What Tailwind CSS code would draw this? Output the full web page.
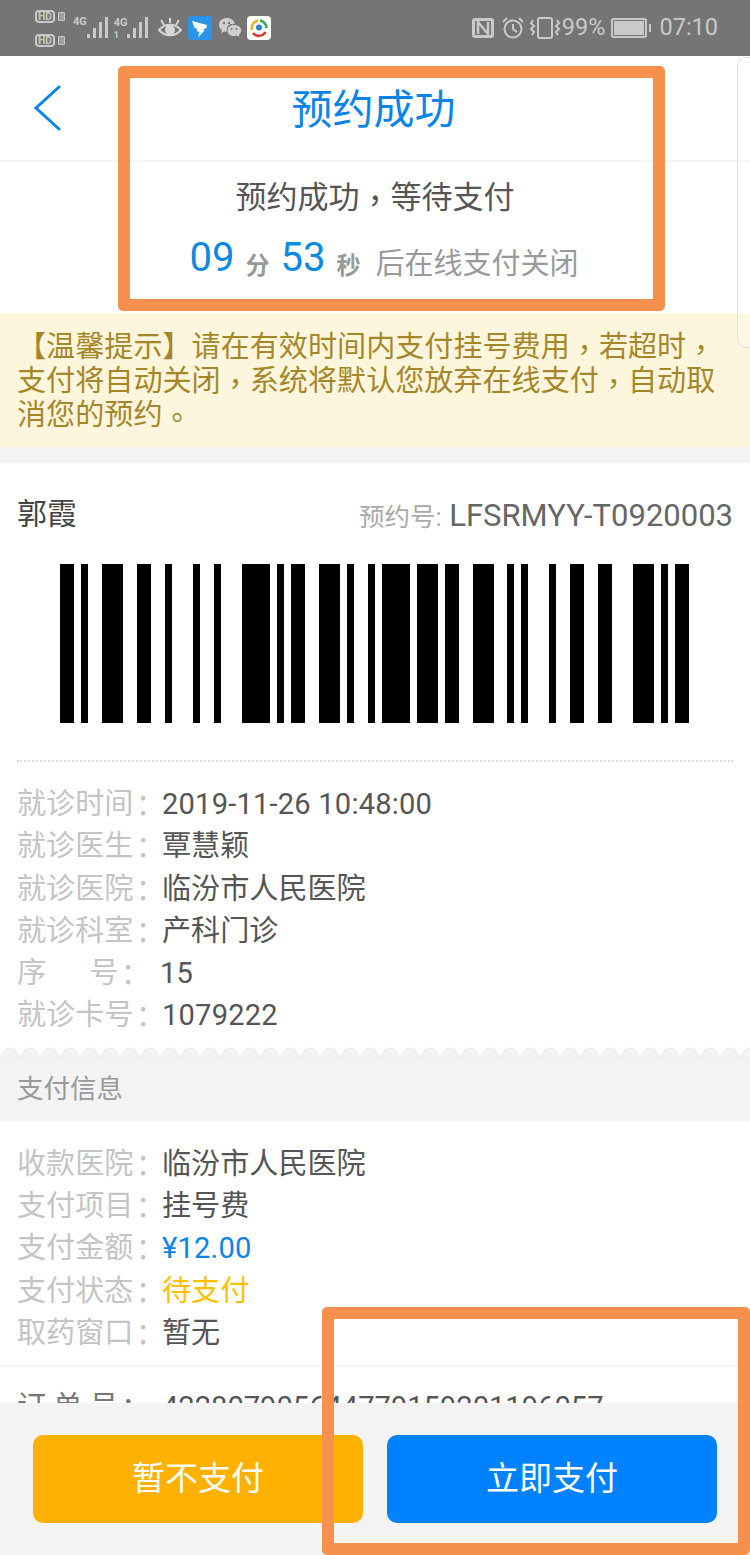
<!DOCTYPE html>
<html lang="zh-CN">
<head>
<meta charset="UTF-8">
<meta name="viewport" content="width=device-width, initial-scale=1.0">
<title>预约成功</title>
<script src="https://cdn.jsdelivr.net/npm/@tailwindcss/browser@4"></script>
</head>
<body class="bg-white font-['Roboto','Noto_Sans_CJK_SC',sans-serif]">
<div class="relative w-[750px] h-[1555px] overflow-hidden bg-white">

  <!-- status bar -->
  <div class="h-14 bg-[#757575] flex items-center text-[#c9c9c9]">
    <div class="ml-[35px] w-[31px] flex flex-col gap-[11px]">
      <div class="flex items-center gap-[3px]">
        <span class="w-5 h-[13px] border-2 border-[#c9c9c9] rounded-[4px] text-[10px] leading-[9px] font-bold text-center">HD</span>
        <span class="w-[7px] h-[9px] border border-[#c9c9c9] bg-[#c9c9c9]/50 rounded-[1px]"></span>
      </div>
      <div class="flex items-center gap-[3px]">
        <span class="w-5 h-[13px] border-2 border-[#c9c9c9] rounded-[4px] text-[10px] leading-[9px] font-bold text-center">HD</span>
        <span class="w-[7px] h-[9px] border border-[#c9c9c9] bg-[#c9c9c9]/50 rounded-[1px]"></span>
      </div>
    </div>
    <span class="ml-[7px] mb-[14px] text-[11px] leading-none font-bold">4G</span>
    <svg class="-ml-px" width="24" height="24" viewBox="0 0 24 24" fill="#c9c9c9"><rect x="1" y="18" width="3" height="4"/><rect x="7" y="12" width="3" height="10"/><rect x="13" y="6" width="3" height="16"/><rect x="19" y="1" width="3" height="21"/></svg>
    <div class="ml-1 w-[11px] h-[28px] flex flex-col justify-between text-[11px] leading-none font-bold"><span class="mt-[3px]">4G</span><span class="text-[9px] mb-[2px]">1</span></div>
    <svg class="ml-px" width="24" height="24" viewBox="0 0 24 24" fill="#c9c9c9"><rect x="1" y="18" width="3" height="4"/><rect x="7" y="12" width="3" height="10"/><rect x="13" y="6" width="3" height="16"/><rect x="19" y="1" width="3" height="21"/></svg>
    <svg class="ml-2" width="24" height="22" viewBox="0 0 24 22" fill="none" stroke="#d6d6d6" stroke-width="2"><path d="M1 13 C7 6 17 6 23 13 C17 20 7 20 1 13 Z"/><circle cx="12" cy="13" r="4" fill="#d6d6d6"/><path d="M3 3 L6 8 M21 3 L18 8 M12 1 V6"/></svg>
    <div class="ml-[6px] w-6 h-6 rounded-[4px] bg-[#2a94e8] flex items-center justify-center">
      <svg width="24" height="24" viewBox="0 0 24 24" fill="#fff"><path d="M4 5 L19 9 L18.5 12 L15 13.5 L16.5 14.5 L10 21.5 L11.5 16 L8.5 15 L9.5 13 L6.5 12 Z"/></svg>
    </div>
    <svg class="ml-[6px]" width="24" height="22" viewBox="0 0 24 22"><path d="M9 1 C4 1 1 4 1 8 C1 10 2 12 4 13 L3 16 L6.5 14.5 C7 14.6 8 14.7 9 14.7 Z M9 1 C13 1 16 3.5 17 7 C12 6 8 9 8.5 14.7 L9 14.7 Z" fill="#d0d0d0"/><path d="M16 7.5 C12 7.5 9 10 9 13.5 C9 17 12 19.5 16 19.5 C17 19.5 18 19.3 19 19 L22 20.5 L21.5 17.5 C22.5 16.5 23.5 15 23.5 13.5 C23.5 10 20 7.5 16 7.5 Z" fill="#d0d0d0" stroke="#757575" stroke-width="1"/><circle cx="6" cy="6" r="1.2" fill="#757575"/><circle cx="11" cy="6" r="1.2" fill="#757575"/><circle cx="13.5" cy="12" r="1" fill="#757575"/><circle cx="18.5" cy="12" r="1" fill="#757575"/></svg>
    <div class="ml-[5px] w-6 h-6 rounded-[4px] bg-white flex items-center justify-center">
      <svg width="20" height="20" viewBox="0 0 20 20" fill="none" stroke-width="2.5"><path d="M3 12 A7.5 7.5 0 0 1 9 2.6" stroke="#f0b020"/><path d="M11 2.6 A7.5 7.5 0 0 1 17.5 10" stroke="#3aa655"/><path d="M16.5 14 A7.5 7.5 0 0 1 4 15" stroke="#d8352a"/><circle cx="10" cy="9.5" r="3" fill="#2a7fd8" stroke="none"/></svg>
    </div>
    <div class="flex-1"></div>
    <svg width="22" height="20" viewBox="0 0 22 20"><rect width="22" height="20" rx="3" fill="#c9c9c9"/><rect x="3" y="3" width="16" height="14" fill="#757575"/><path d="M6 16 V4 L16 16 V4" fill="none" stroke="#c9c9c9" stroke-width="2.5"/></svg>
    <svg class="ml-[7px]" width="24" height="24" viewBox="0 0 24 24" fill="none" stroke="#c9c9c9" stroke-width="2"><circle cx="12" cy="13" r="8.5"/><path d="M12 8 V13 L16 16 M2 6 L6 2 M22 6 L18 2"/></svg>
    <svg class="ml-1" width="32" height="24" viewBox="0 0 32 24" fill="none" stroke="#c9c9c9" stroke-width="2"><rect x="9" y="2" width="14" height="20" rx="2"/><path d="M4 4 L2 7 L5 10 L2 13 L5 16 L3 19 M28 4 L30 7 L27 10 L30 13 L27 16 L29 19"/></svg>
    <span class="ml-px text-[23.5px] leading-none">99%</span>
    <div class="ml-[6px] w-9 h-[20px] border-2 border-[#c9c9c9] rounded-[3px] p-px"><div class="w-full h-full bg-[#c9c9c9]"></div></div>
    <div class="ml-[2px] w-[2px] h-2 bg-[#c9c9c9]"></div>
    <span class="ml-2 mr-[32px] text-[23.5px] leading-none">07:10</span>
  </div>

  <!-- header -->
  <div class="h-[106px] border-b-2 border-[#f4f4f4] flex items-center justify-center relative">
    <svg class="absolute left-[33px] top-[29px]" width="30" height="46" viewBox="0 0 30 46" fill="none" stroke="#0a84e8" stroke-width="3" stroke-linecap="round"><path d="M26 2 L3 23 L26 44"/></svg>
    <h1 class="text-[#0a84e8] text-[41px] leading-none mt-[5px] mr-[3px]">预约成功</h1>
  </div>

  <!-- countdown -->
  <div class="h-[151px] flex flex-col items-center">
    <p class="mt-[16px] text-[31px] leading-[40px] text-[#555]">预约成功<span lang="zh-TW" class="relative top-[4px] font-['Noto_Sans_CJK_TC'] leading-none">，</span>等待支付</p>
    <div class="mt-[23px] ml-[18px] flex items-baseline text-[#999] leading-none">
      <span class="text-[#0a8ae0] text-[40px] -translate-y-[3px]">09</span>
      <span class="ml-[11px] text-[24px] font-bold">分</span>
      <span class="ml-[11px] text-[#0a8ae0] text-[40px] -translate-y-[3px]">53</span>
      <span class="ml-[11px] text-[24px] font-bold">秒</span>
      <span class="ml-[15px] text-[29px]">后在线支付关闭</span>
    </div>
  </div>

  <!-- notice -->
  <div class="h-[134px] bg-[#fdf6dd] px-[17px] pt-[17px] text-[#a5872a] text-[29.1px] leading-[34px]">
    【温馨提示】请在有效时间内支付挂号费用<span lang="zh-TW" class="relative top-[4px] font-['Noto_Sans_CJK_TC'] leading-none">，</span>若超时<span lang="zh-TW" class="relative top-[4px] font-['Noto_Sans_CJK_TC'] leading-none">，</span>支付将自动关闭<span lang="zh-TW" class="relative top-[4px] font-['Noto_Sans_CJK_TC'] leading-none">，</span>系统将默认您放弃在线支付<span lang="zh-TW" class="relative top-[4px] font-['Noto_Sans_CJK_TC'] leading-none">，</span>自动取消您的预约<span lang="zh-TW" class="relative top-[4px] font-['Noto_Sans_CJK_TC'] leading-none">。</span>
  </div>
  <div class="h-4 bg-[#f3f3f3]"></div>

  <!-- ticket -->
  <div class="px-[17px]">
    <div class="h-[101px] flex justify-between items-end pb-[30px]">
      <span class="text-[30px] leading-[40px] text-[#444]">郭霞</span>
      <span class="text-[31px] leading-[40px] text-[#666] -mb-[3px]"><span class="text-[25.5px] text-[#aaa]">预约号:</span> LFSRMYY-T0920003</span>
    </div>
    <svg class="-ml-[17px] block" width="750" height="159" viewBox="0 0 750 159" fill="#000">
      <rect x="60" width="14" height="159"/><rect x="81" width="7" height="159"/><rect x="102" width="21" height="159"/><rect x="137" width="14" height="159"/><rect x="165" width="7" height="159"/><rect x="193" width="7" height="159"/><rect x="214" width="7" height="159"/><rect x="242" width="28" height="159"/><rect x="277" width="7" height="159"/><rect x="291" width="14" height="159"/><rect x="319" width="21" height="159"/><rect x="347" width="7" height="159"/><rect x="368" width="7" height="159"/><rect x="382" width="28" height="159"/><rect x="417" width="21" height="159"/><rect x="445" width="14" height="159"/><rect x="473" width="21" height="159"/><rect x="507" width="7" height="159"/><rect x="521" width="7" height="159"/><rect x="549" width="7" height="159"/><rect x="570" width="14" height="159"/><rect x="598" width="14" height="159"/><rect x="633" width="21" height="159"/><rect x="661" width="7" height="159"/><rect x="675" width="14" height="159"/>
    </svg>
    <div class="mt-[37px] border-t-2 border-dotted border-[#dcdcdc]"></div>
    <dl class="pt-[21px] text-[29.1px] leading-[42.3px] text-[#555]">
      <div class="flex"><dt class="w-[145px] shrink-0 whitespace-nowrap text-[#c4c4c4]">就诊时间<span lang="zh-TW" class="relative top-[3px] -left-[5px] font-['Noto_Sans_CJK_TC'] leading-none">：</span></dt><dd class="tracking-[0.2px]">2019-11-26 10:48:00</dd></div>
      <div class="flex"><dt class="w-[145px] shrink-0 whitespace-nowrap text-[#c4c4c4]">就诊医生<span lang="zh-TW" class="relative top-[3px] -left-[5px] font-['Noto_Sans_CJK_TC'] leading-none">：</span></dt><dd>覃慧颖</dd></div>
      <div class="flex"><dt class="w-[145px] shrink-0 whitespace-nowrap text-[#c4c4c4]">就诊医院<span lang="zh-TW" class="relative top-[3px] -left-[5px] font-['Noto_Sans_CJK_TC'] leading-none">：</span></dt><dd>临汾市人民医院</dd></div>
      <div class="flex"><dt class="w-[145px] shrink-0 whitespace-nowrap text-[#c4c4c4]">就诊科室<span lang="zh-TW" class="relative top-[3px] -left-[5px] font-['Noto_Sans_CJK_TC'] leading-none">：</span></dt><dd>产科门诊</dd></div>
      <div class="flex"><dt class="w-[143px] shrink-0 text-[#c4c4c4] whitespace-pre">序      号<span lang="zh-TW" class="relative top-[3px] -left-[5px] font-['Noto_Sans_CJK_TC'] leading-none">：</span></dt><dd class="tracking-[0.2px]">15</dd></div>
      <div class="flex"><dt class="w-[145px] shrink-0 whitespace-nowrap text-[#c4c4c4]">就诊卡号<span lang="zh-TW" class="relative top-[3px] -left-[5px] font-['Noto_Sans_CJK_TC'] leading-none">：</span></dt><dd class="tracking-[0.2px]">1079222</dd></div>
    </dl>
  </div>

  <!-- scalloped edge -->
  <svg class="block mt-[10px]" width="750" height="10" viewBox="0 0 750 10">
    <defs><pattern id="scallop" width="20" height="10" patternUnits="userSpaceOnUse" x="0"><path d="M0 9 C3 9 3 1 10 1 C17 1 17 9 20 9 V10 H0 Z" fill="#f3f3f3" stroke="#ececec" stroke-width="1"/></pattern></defs>
    <rect width="750" height="10" fill="url(#scallop)"/>
  </svg>
  <div class="h-[64px] bg-[#f3f3f3] px-[17px] flex items-center text-[26.5px] text-[#999]">支付信息</div>

  <!-- payment info -->
  <dl class="px-[17px] pt-[22px] text-[29.1px] leading-[42.3px] text-[#555]">
    <div class="flex"><dt class="w-[145px] shrink-0 whitespace-nowrap text-[#c4c4c4]">收款医院<span lang="zh-TW" class="relative top-[3px] -left-[5px] font-['Noto_Sans_CJK_TC'] leading-none">：</span></dt><dd>临汾市人民医院</dd></div>
    <div class="flex"><dt class="w-[145px] shrink-0 whitespace-nowrap text-[#c4c4c4]">支付项目<span lang="zh-TW" class="relative top-[3px] -left-[5px] font-['Noto_Sans_CJK_TC'] leading-none">：</span></dt><dd>挂号费</dd></div>
    <div class="flex"><dt class="w-[145px] shrink-0 whitespace-nowrap text-[#c4c4c4]">支付金额<span lang="zh-TW" class="relative top-[3px] -left-[5px] font-['Noto_Sans_CJK_TC'] leading-none">：</span></dt><dd class="text-[#0a84e8] tracking-[0.2px]">¥12.00</dd></div>
    <div class="flex"><dt class="w-[145px] shrink-0 whitespace-nowrap text-[#c4c4c4]">支付状态<span lang="zh-TW" class="relative top-[3px] -left-[5px] font-['Noto_Sans_CJK_TC'] leading-none">：</span></dt><dd class="text-[#ffc000]">待支付</dd></div>
    <div class="flex"><dt class="w-[145px] shrink-0 whitespace-nowrap text-[#c4c4c4]">取药窗口<span lang="zh-TW" class="relative top-[3px] -left-[5px] font-['Noto_Sans_CJK_TC'] leading-none">：</span></dt><dd>暂无</dd></div>
  </dl>
  <div class="mt-[11px] border-t-2 border-[#f4f4f4]"></div>
  <div class="px-[17px] pt-[19px] flex text-[29.1px] leading-[42.3px] text-[#555]">
    <span class="w-[145px] shrink-0 text-[#777] whitespace-pre">订 单 号<span lang="zh-TW" class="relative top-[3px] -left-[5px] font-['Noto_Sans_CJK_TC'] leading-none">：</span></span><span>422807905644779159201196057</span>
  </div>

  <!-- bottom actions -->
  <div class="absolute left-0 right-0 bottom-0 h-[152px] bg-[#f3f3f3] px-[33px] pt-[32px] flex gap-6">
    <button class="w-[330px] h-[88px] rounded-[10px] bg-[#ffb100] text-white text-[33px]">暂不支付</button>
    <button class="w-[330px] h-[88px] rounded-[10px] bg-[#0082ff] text-white text-[33px]">立即支付</button>
  </div>

  <!-- side tab peeking in from the right -->
  <div class="absolute left-[737px] top-[57px] w-5 h-[291px] rounded-l-[10px] border border-[#dedede] bg-white/20"></div>

  <!-- annotation boxes -->
  <div class="absolute left-[118px] top-[66px] w-[547px] h-[245px] border-[12px] border-[#f5914c] rounded-[5px]"></div>
  <div class="absolute left-[322px] top-[1307px] w-[428px] h-[248px] border-[12px] border-[#f5914c] rounded-[5px]"></div>
</div>
</body>
</html>
